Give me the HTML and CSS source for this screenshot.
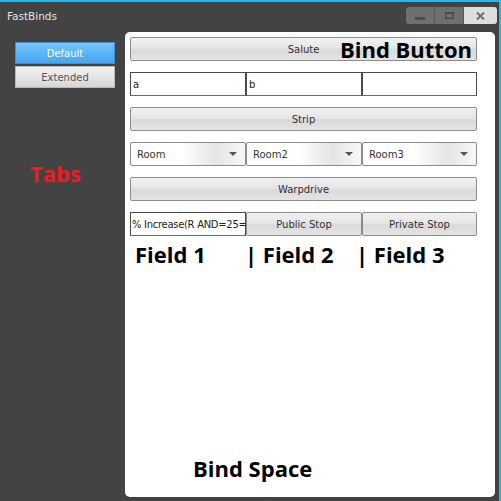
FILE: index.html
```html
<!DOCTYPE html>
<html>
<head>
<meta charset="utf-8">
<link rel="stylesheet" href="styles.css">
</head>
<body>
<div class="window">
  <div class="titlebar">
    <span class="title">FastBinds</span>
    <div class="controls">
      <span class="ctl min"><svg width="10" height="3" viewBox="0 0 10 3"><rect x="0" y="0" width="10" height="3" fill="#4b4b4b"/></svg></span>
      <span class="ctl max"><svg width="9" height="7" viewBox="0 0 9 7"><rect x="0.75" y="1" width="7.5" height="5.25" fill="none" stroke="#4b4b4b" stroke-width="1.5"/><rect x="0" y="0" width="9" height="2" fill="#4b4b4b"/></svg></span>
      <span class="ctl close"><svg width="9" height="8" viewBox="0 0 9 8"><path d="M1 0.5 L8 7.5 M8 0.5 L1 7.5" stroke="#6e6e6e" stroke-width="2"/></svg></span>
    </div>
  </div>
  <div class="main">
    <div class="sidebar">
      <div class="tab active">Default</div>
      <div class="tab">Extended</div>
      <div class="note tabs-note">Tabs</div>
    </div>
    <div class="panel">
      <div class="rows">
        <div class="btn bind-btn">Salute<span class="note bind-note">Bind Button</span></div>
        <div class="grid3">
          <div class="field">a</div>
          <div class="field">b</div>
          <div class="field"></div>
        </div>
        <div class="btn">Strip</div>
        <div class="grid3">
          <div class="combo"><span>Room</span><span class="arrow"></span></div>
          <div class="combo"><span>Room2</span><span class="arrow"></span></div>
          <div class="combo"><span>Room3</span><span class="arrow"></span></div>
        </div>
        <div class="btn">Warpdrive</div>
        <div class="grid3">
          <div class="field clip">% Increase(R AND=25=</div>
          <div class="btn">Public Stop</div>
          <div class="btn">Private Stop</div>
        </div>
      </div>
      <div class="labels">
        <div class="note lab1">Field 1</div>
        <div class="note lab2">| Field 2</div>
        <div class="note lab3">| Field 3</div>
      </div>
      <div class="note space-note">Bind Space</div>
    </div>
  </div>
</div>
</body>
</html>
```

FILE: styles.css
```css
html, body {
  margin: 0;
  padding: 0;
  background: #434343;
}

.window {
  width: 501px;
  height: 501px;
  box-sizing: border-box;
  border-top: 2px solid #22b8ea;
  border-right: 2px solid #22b8ea;
  background: #434343;
  display: flex;
  flex-direction: column;
  font-family: "DejaVu Sans", sans-serif;
  font-size: 10px;
}

.titlebar {
  height: 30px;
  flex: none;
  display: flex;
  align-items: flex-start;
  justify-content: space-between;
}

.title {
  color: #e4e4e4;
  font-size: 10.5px;
  margin: 8px 0 0 7px;
}

.controls {
  display: flex;
  margin: 5px 2px 0 0;
  height: 17px;
  border-radius: 3px;
  overflow: hidden;
}

.ctl {
  display: flex;
  align-items: center;
  justify-content: center;
  height: 17px;
}

.ctl.min {
  width: 28px;
  background: #6f6f6f;
  border-right: 1px solid #5a5a5a;
}

.ctl.min svg { margin-top: 6px; }

.ctl.max {
  width: 28px;
  background: #6f6f6f;
  border-right: 1px solid #5a5a5a;
}

.ctl.close {
  width: 33px;
  background: #dedede;
}

.main {
  flex: 1;
  display: flex;
  min-height: 0;
}

.sidebar {
  width: 125px;
  flex: none;
  box-sizing: border-box;
  padding: 10px 0 0 15px;
  display: flex;
  flex-direction: column;
  gap: 2px;
}

.tab {
  width: 100px;
  height: 22px;
  box-sizing: border-box;
  border: 1px solid #b8b8b8;
  background: linear-gradient(#f2f2f2, #e6e6e6 50%, #d6d6d6);
  color: #555;
  display: flex;
  align-items: center;
  justify-content: center;
}

.tab.active {
  border-color: #3b8fd6;
  background: linear-gradient(#7cc6fb, #5ab4f6 50%, #48a6ee);
  color: #fff;
}

.note {
  font-family: "Open Sans", "Noto Sans", sans-serif;
  font-weight: 700;
  font-size: 22px;
  color: #000;
  line-height: 24px;
  white-space: nowrap;
}

.tabs-note {
  color: #ee1c24;
  margin: 71px 0 0 15px;
}

.panel {
  width: 370px;
  margin-bottom: 4px;
  background: #fff;
  border-radius: 5px;
  box-sizing: border-box;
  padding: 5px 18px 0 5px;
  display: flex;
  flex-direction: column;
}

.rows {
  display: flex;
  flex-direction: column;
  gap: 11px;
}

.btn {
  height: 24px;
  box-sizing: border-box;
  border: 1px solid #8c8c8c;
  border-radius: 2px;
  background: linear-gradient(#f1f1f1, #e6e6e6 45%, #dadada 55%, #e4e4e4);
  color: #333;
  display: flex;
  align-items: center;
  justify-content: center;
}

.bind-btn {
  position: relative;
}

.bind-note {
  position: absolute;
  right: 4px;
  top: -1px;
}

.grid3 {
  display: grid;
  grid-template-columns: 116px 116px 115px;
  height: 24px;
}

.field {
  box-sizing: border-box;
  border: 1px solid #4a4a4a;
  border-bottom-color: #6a6a6a;
  background: #fff;
  color: #222;
  padding: 0 1px 0 2px;
  display: flex;
  align-items: center;
  overflow: hidden;
  white-space: nowrap;
}

.field.clip {
  padding-left: 1px;
  letter-spacing: -0.3px;
}

.combo {
  box-sizing: border-box;
  border: 1px solid #8c8c8c;
  border-radius: 2px;
  background: linear-gradient(to right, #fff, #fff 45%, #e4e4e4 75%, #f8f8f8);
  color: #333;
  padding: 0 8px 0 6px;
  display: flex;
  align-items: center;
  justify-content: space-between;
}

.arrow {
  width: 0;
  height: 0;
  border-left: 4px solid transparent;
  border-right: 4px solid transparent;
  border-top: 4px solid #555;
}

.labels {
  display: flex;
  margin-top: 6px;
}

.lab1 {
  margin-left: 5px;
  width: 110px;
}

.lab2 {
  width: 111px;
}

.space-note {
  margin: auto 0 17px 63px;
}
```
